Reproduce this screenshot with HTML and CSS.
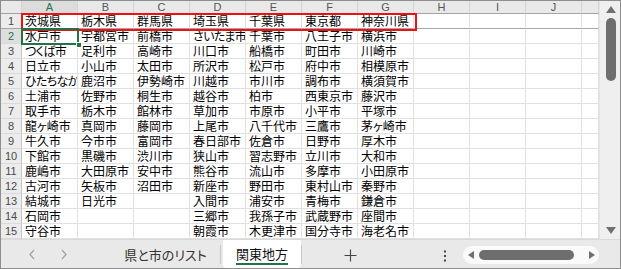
FILE: index.html
```html
<!DOCTYPE html>
<html lang="ja">
<head>
<meta charset="utf-8">
<link rel="stylesheet" href="styles.css">
</head>
<body>
<div class="frame">
  <div class="main">
    <div class="sheet">
      <div class="h corner"></div><div class="h sel">A</div><div class="h">B</div><div class="h">C</div><div class="h">D</div><div class="h">E</div><div class="h">F</div><div class="h">G</div><div class="h">H</div><div class="h">I</div><div class="h">J</div><div class="h"></div>

      <div class="rh f">1</div><div class="c f">茨城県</div><div class="c f">栃木県</div><div class="c f">群馬県</div><div class="c f">埼玉県</div><div class="c f">千葉県</div><div class="c f">東京都</div><div class="c f">神奈川県</div><div class="c f"></div><div class="c f"></div><div class="c f"></div><div class="c f"></div>

      <div class="rh sel">2</div><div class="c">水戸市</div><div class="c">宇都宮市</div><div class="c">前橋市</div><div class="c k">さいたま市</div><div class="c">千葉市</div><div class="c">八王子市</div><div class="c">横浜市</div><div class="c"></div><div class="c"></div><div class="c"></div><div class="c"></div>

      <div class="rh">3</div><div class="c k">つくば市</div><div class="c">足利市</div><div class="c">高崎市</div><div class="c">川口市</div><div class="c">船橋市</div><div class="c">町田市</div><div class="c">川崎市</div><div class="c"></div><div class="c"></div><div class="c"></div><div class="c"></div>

      <div class="rh">4</div><div class="c">日立市</div><div class="c">小山市</div><div class="c">太田市</div><div class="c">所沢市</div><div class="c">松戸市</div><div class="c">府中市</div><div class="c">相模原市</div><div class="c"></div><div class="c"></div><div class="c"></div><div class="c"></div>

      <div class="rh">5</div><div class="c k">ひたちなか市</div><div class="c">鹿沼市</div><div class="c">伊勢崎市</div><div class="c">川越市</div><div class="c">市川市</div><div class="c">調布市</div><div class="c">横須賀市</div><div class="c"></div><div class="c"></div><div class="c"></div><div class="c"></div>

      <div class="rh">6</div><div class="c">土浦市</div><div class="c">佐野市</div><div class="c">桐生市</div><div class="c">越谷市</div><div class="c">柏市</div><div class="c">西東京市</div><div class="c">藤沢市</div><div class="c"></div><div class="c"></div><div class="c"></div><div class="c"></div>

      <div class="rh">7</div><div class="c">取手市</div><div class="c">栃木市</div><div class="c">館林市</div><div class="c">草加市</div><div class="c">市原市</div><div class="c">小平市</div><div class="c">平塚市</div><div class="c"></div><div class="c"></div><div class="c"></div><div class="c"></div>

      <div class="rh">8</div><div class="c">龍ヶ崎市</div><div class="c">真岡市</div><div class="c">藤岡市</div><div class="c">上尾市</div><div class="c">八千代市</div><div class="c">三鷹市</div><div class="c">茅ヶ崎市</div><div class="c"></div><div class="c"></div><div class="c"></div><div class="c"></div>

      <div class="rh">9</div><div class="c">牛久市</div><div class="c">今市市</div><div class="c">富岡市</div><div class="c">春日部市</div><div class="c">佐倉市</div><div class="c">日野市</div><div class="c">厚木市</div><div class="c"></div><div class="c"></div><div class="c"></div><div class="c"></div>

      <div class="rh">10</div><div class="c">下館市</div><div class="c">黒磯市</div><div class="c">渋川市</div><div class="c">狭山市</div><div class="c">習志野市</div><div class="c">立川市</div><div class="c">大和市</div><div class="c"></div><div class="c"></div><div class="c"></div><div class="c"></div>

      <div class="rh">11</div><div class="c">鹿嶋市</div><div class="c">大田原市</div><div class="c">安中市</div><div class="c">熊谷市</div><div class="c">流山市</div><div class="c">多摩市</div><div class="c">小田原市</div><div class="c"></div><div class="c"></div><div class="c"></div><div class="c"></div>

      <div class="rh">12</div><div class="c">古河市</div><div class="c">矢板市</div><div class="c">沼田市</div><div class="c">新座市</div><div class="c">野田市</div><div class="c">東村山市</div><div class="c">秦野市</div><div class="c"></div><div class="c"></div><div class="c"></div><div class="c"></div>

      <div class="rh">13</div><div class="c">結城市</div><div class="c">日光市</div><div class="c"></div><div class="c">入間市</div><div class="c">浦安市</div><div class="c">青梅市</div><div class="c">鎌倉市</div><div class="c"></div><div class="c"></div><div class="c"></div><div class="c"></div>

      <div class="rh">14</div><div class="c">石岡市</div><div class="c"></div><div class="c"></div><div class="c">三郷市</div><div class="c">我孫子市</div><div class="c">武蔵野市</div><div class="c">座間市</div><div class="c"></div><div class="c"></div><div class="c"></div><div class="c"></div>

      <div class="rh">15</div><div class="c">守谷市</div><div class="c"></div><div class="c"></div><div class="c">朝霞市</div><div class="c">木更津市</div><div class="c">国分寺市</div><div class="c">海老名市</div><div class="c"></div><div class="c"></div><div class="c"></div><div class="c"></div>
    </div>
    <div class="vscroll">
      <svg class="arrow-up" width="10" height="7" viewBox="0 0 10 7"><polygon points="5,0 10,7 0,7" fill="#6f6f6f"/></svg>
      <div class="vthumb"></div>
      <div class="vspace"></div>
      <svg class="arrow-down" width="10" height="7" viewBox="0 0 10 7"><polygon points="0,0 10,0 5,7" fill="#6f6f6f"/></svg>
    </div>
  </div>

  <div class="tabbar">
    <div class="nav">
      <svg class="chev" width="8" height="11" viewBox="0 0 8 11"><polyline points="6,1 2,5.5 6,10" fill="none" stroke="#a0a0a0" stroke-width="1.2"/></svg>
      <svg class="chev" width="8" height="11" viewBox="0 0 8 11"><polyline points="2,1 6,5.5 2,10" fill="none" stroke="#a0a0a0" stroke-width="1.2"/></svg>
    </div>
    <div class="tab">県と市のリスト</div>
    <div class="sep"></div>
    <div class="tab active"><span class="tab-label">関東地方</span></div>
    <div class="sep"></div>
    <svg class="plus" width="13" height="13" viewBox="0 0 13 13"><path d="M6.5 0.5V12.5M0.5 6.5H12.5" stroke="#444444" stroke-width="1.1" fill="none"/></svg>
    <svg class="dots" width="4" height="12" viewBox="0 0 4 12"><rect x="1" y="0.5" width="2" height="2" fill="#444"/><rect x="1" y="5" width="2" height="2" fill="#444"/><rect x="1" y="9.5" width="2" height="2" fill="#444"/></svg>
    <div class="hscroll">
      <svg width="6" height="8" viewBox="0 0 6 8"><polygon points="6,0 6,8 0,4" fill="#6f6f6f"/></svg>
      <div class="hthumb"></div>
      <svg width="6" height="8" viewBox="0 0 6 8"><polygon points="0,0 6,4 0,8" fill="#6f6f6f"/></svg>
    </div>
  </div>

  <div class="redbox"></div>
  <div class="selbox"></div>
  <div class="handle"></div>
</div>
</body>
</html>
```

FILE: styles.css
```css
* { box-sizing: border-box; }
html, body { margin: 0; padding: 0; background: #ffffff; }

.frame {
  position: relative;
  width: 621px;
  height: 269px;
  border: 1px solid #8e8e8e;
  background: #ffffff;
  overflow: hidden;
  display: flex;
  flex-direction: column;
}

.main {
  display: flex;
  height: 238px;
}

.sheet {
  display: grid;
  grid-template-columns: 21px repeat(10, 56px) 17px;
  grid-template-rows: 13px repeat(15, 15px);
  width: 598px;
  overflow: hidden;
}

.h {
  background: #e9e9e9;
  border-right: 1px solid #d4d4d4;
  border-bottom: 1px solid #a3a3a3;
  font-family: "Liberation Sans", Arial, sans-serif;
  font-size: 11px;
  line-height: 12px;
  color: #555555;
  text-align: center;
}
.h.sel {
  background: #dcdcdc;
  color: #217346;
}

.rh {
  background: #ececec;
  border-right: 1px solid #c4c4c4;
  border-bottom: 1px solid #dadada;
  font-family: "Liberation Sans", Arial, sans-serif;
  font-size: 11px;
  line-height: 14px;
  color: #4a4a4a;
  text-align: center;
}
.rh.sel {
  background: #dedede;
  color: #217346;
}

.c {
  border-right: 1px solid #e0e0e0;
  border-bottom: 1px solid #e0e0e0;
  padding-left: 3px;
  font-family: "Noto Sans CJK JP", "Noto Sans CJK SC", sans-serif;
  font-size: 12px;
  line-height: 14px;
  color: #000000;
  white-space: nowrap;
  overflow-x: clip;
  overflow-y: visible;
  font-feature-settings: "palt";
}
.c.k { letter-spacing: -0.6px; }

.f { border-bottom-color: #a6a6a6; }

.vscroll {
  width: 21px;
  height: 238px;
  background: #efefef;
  border-left: 1px solid #e4e4e4;
  display: flex;
  flex-direction: column;
  align-items: center;
  padding: 5px 0 5px 1px;
}
.vthumb {
  width: 10px;
  height: 63px;
  margin-top: 5px;
  background: #6e6e6e;
  border-radius: 5px;
}
.vspace { flex: 1; }

.tabbar {
  height: 29px;
  background: #e9e9e9;
  border-top: 1px solid #dadada;
  display: flex;
  align-items: center;
}

.nav {
  width: 110px;
  height: 100%;
  display: flex;
  align-items: center;
  padding-left: 27px;
  gap: 24px;
}

.tab {
  width: 109px;
  height: 100%;
  display: flex;
  align-items: center;
  justify-content: center;
  font-family: "Noto Sans CJK JP", sans-serif;
  font-size: 13px;
  color: #333333;
  font-feature-settings: "palt";
}
.tab.active {
  width: 78px;
  margin-left: 2px;
  background: #ffffff;
  border-radius: 0 0 4px 4px;
  color: #111111;
  padding-top: 2px;
}
.tab-label {
  border-bottom: 2px solid #217346;
  line-height: 16px;
  padding-bottom: 1px;
}

.sep {
  width: 1px;
  height: 19px;
  background: #c6c6c6;
}

.plus {
  margin-left: 42px;
  margin-top: 2px;
}

.dots {
  margin-left: 86px;
  margin-top: 3px;
}

.hscroll {
  margin-left: 16px;
  width: 136px;
  height: 18px;
  background: #fafafa;
  border-radius: 9px;
  display: flex;
  align-items: center;
  padding-left: 5px;
  margin-top: 2px;
}
.hthumb {
  width: 95px;
  height: 10px;
  margin: 0 15px 0 5px;
  background: #6e6e6e;
  border-radius: 5px;
}

.redbox {
  position: absolute;
  left: 20px;
  top: 12px;
  width: 396px;
  height: 18px;
  border: 2px solid #ee1111;
}

.selbox {
  position: absolute;
  left: 20px;
  top: 27px;
  width: 58px;
  height: 17px;
  border: 2px solid #217346;
}

.handle {
  position: absolute;
  left: 75px;
  top: 41px;
  width: 6px;
  height: 6px;
  background: #217346;
  border: 1px solid #ffffff;
}
```
